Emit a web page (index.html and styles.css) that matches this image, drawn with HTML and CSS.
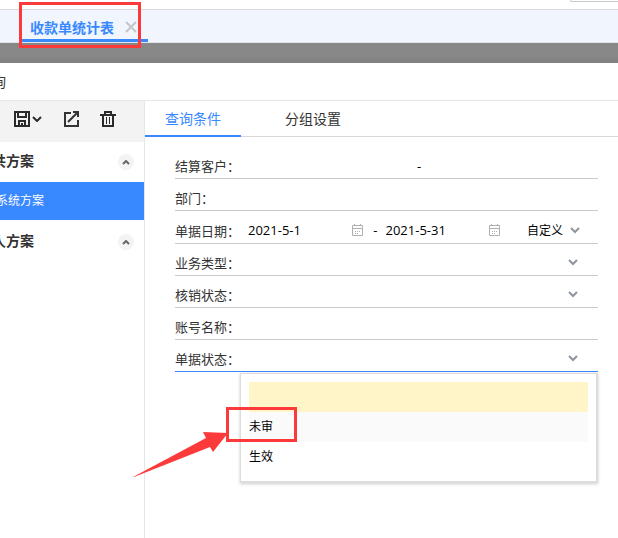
FILE: index.html
```html
<!DOCTYPE html>
<html lang="zh-CN">
<head>
    <meta charset="UTF-8">
    <meta name="viewport" content="width=device-width, initial-scale=1.0">
    <title>收款单统计表</title>
    <link rel="stylesheet" href="styles.css">
</head>
<body>
    <div class="app">
        <div class="topbar">
            <div class="topbar-search"></div>
        </div>
        <div class="page-tabs">
            <div class="page-tab">
                <a href="#">收款单统计表</a>
                <button class="tab-close" aria-label="关闭">
                    <svg width="12" height="12" viewBox="0 0 12 12"><path d="M1 1l10 10M11 1L1 11" fill="none" stroke="#c4c6ca" stroke-width="2"/></svg>
                </button>
                <div class="mark mark-tab"></div>
            </div>
        </div>
        <div class="mask"></div>

        <div class="dialog">
            <div class="dialog-title">查询</div>
            <div class="dialog-body">
                <div class="sidebar">
                    <div class="toolbar">
                        <button class="tool" aria-label="保存">
                            <svg width="16" height="16" viewBox="0 0 16 16" fill="none" stroke="#2b2b2b" stroke-width="2"><path d="M1 1h14v14H1z"/><path d="M4 1v5h8V1M5 15v-5h6v5"/><path d="M8 12v3"/></svg>
                            <svg width="10" height="6" viewBox="0 0 10 6" fill="none" stroke="#2b2b2b" stroke-width="2"><path d="M1 1l4 4 4-4"/></svg>
                        </button>
                        <button class="tool" aria-label="另存">
                            <svg width="16" height="16" viewBox="0 0 16 16" fill="none" stroke="#333" stroke-width="2"><path d="M8 2H2v13h13V9"/><path d="M5 11l9-9M10 1h5v5"/></svg>
                        </button>
                        <button class="tool" aria-label="删除">
                            <svg width="16" height="16" viewBox="0 0 16 16" fill="none" stroke="#2b2b2b" stroke-width="2"><path d="M0 4h16M5 4V1h6v3M3 4v11h10V4"/><path d="M6.500 6v7M9.500 6v7" stroke-width="1"/></svg>
                        </button>
                    </div>
                    <div class="group-head">
                        <span>公共方案</span>
                        <button class="collapse" aria-label="收起公共方案">
                            <svg width="8" height="5" viewBox="0 0 8 5"><path d="M1 4l3-3 3 3" fill="none" stroke="#666" stroke-width="2"/></svg>
                        </button>
                    </div>
                    <a class="scheme active" href="#">系统方案</a>
                    <div class="group-head">
                        <span>个人方案</span>
                        <button class="collapse" aria-label="收起个人方案">
                            <svg width="8" height="5" viewBox="0 0 8 5"><path d="M1 4l3-3 3 3" fill="none" stroke="#666" stroke-width="2"/></svg>
                        </button>
                    </div>
                </div>

                <div class="content">
                    <div class="tabs">
                        <button class="tab active">查询条件</button>
                        <button class="tab">分组设置</button>
                    </div>
                    <form class="form">
                        <div class="row">
                            <label for="customer-from">结算客户：</label>
                            <div class="field">
                                <input type="text" id="customer-from">
                                <span class="dash">-</span>
                                <input type="text" aria-label="结算客户至">
                            </div>
                        </div>
                        <div class="row">
                            <label for="dept">部门：</label>
                            <div class="field"><input type="text" id="dept"></div>
                        </div>
                        <div class="row row-date">
                            <label for="date-from">单据日期：</label>
                            <div class="field">
                                <div class="date">
                                    <input type="text" id="date-from" value="2021-5-1">
                                    <svg width="11" height="12" viewBox="0 0 11 12" fill="none" stroke="#b0b0b0"><path d="M.5 1.500h10v10H.5zM.5 4.500h10M2.500 0v2M8.500 0v2"/><path d="M3 7.500h5M3 9.500h3" stroke-dasharray="1 1"/></svg>
                                </div>
                                <span class="dash">-</span>
                                <div class="date">
                                    <input type="text" aria-label="单据日期至" value="2021-5-31">
                                    <svg width="11" height="12" viewBox="0 0 11 12" fill="none" stroke="#b0b0b0"><path d="M.5 1.500h10v10H.5zM.5 4.500h10M2.500 0v2M8.500 0v2"/><path d="M3 7.500h5M3 9.500h3" stroke-dasharray="1 1"/></svg>
                                </div>
                                <div class="range">
                                    <select aria-label="日期范围"><option>自定义</option></select>
                                    <svg class="arrow" width="10" height="7" viewBox="0 0 10 7"><path d="M1 1l4 4 4-4"/></svg>
                                </div>
                            </div>
                        </div>
                        <div class="row">
                            <label for="biz-type">业务类型：</label>
                            <div class="field pick">
                                <select id="biz-type"><option></option></select>
                                <svg class="arrow" width="10" height="7" viewBox="0 0 10 7"><path d="M1 1l4 4 4-4"/></svg>
                            </div>
                        </div>
                        <div class="row">
                            <label for="verify-status">核销状态：</label>
                            <div class="field pick">
                                <select id="verify-status"><option></option></select>
                                <svg class="arrow" width="10" height="7" viewBox="0 0 10 7"><path d="M1 1l4 4 4-4"/></svg>
                            </div>
                        </div>
                        <div class="row">
                            <label for="account">账号名称：</label>
                            <div class="field"><input type="text" id="account"></div>
                        </div>
                        <div class="row focus">
                            <label for="bill-status">单据状态：</label>
                            <div class="field pick">
                                <select id="bill-status"><option></option></select>
                                <svg class="arrow" width="10" height="7" viewBox="0 0 10 7"><path d="M1 1l4 4 4-4"/></svg>
                                <ul class="dropdown" role="listbox" aria-label="单据状态">
                                    <li class="selected" role="option" aria-selected="true"></li>
                                    <li class="hover" role="option">未审</li>
                                    <li role="option">生效</li>
                                    <li class="mark mark-option" role="presentation"></li>
                                    <li class="mark-arrow" role="presentation">
                                        <svg width="96" height="46" viewBox="0 0 96 46"><path d="M0 45L73 6 70 0 95 1 80 20 77 15 1 45z" fill="#fd3a3a"/></svg>
                                    </li>
                                </ul>
                            </div>
                        </div>
                    </form>
                </div>
            </div>
        </div>
    </div>
</body>
</html>
```
FILE: styles.css
```css
:root {
    --primary-color: #3888ff;
    --mark-color: #fd3a3a;
    --line-color: #cacaca;
    --border-color: #e6e6e6;
}
* {
    box-sizing: border-box;
}
body {
    font-family: "Open Sans", "Noto Sans CJK SC", sans-serif;
    font-size: 13px;
    margin: 0;
    background-color: white;
    color: #333;
    overflow: hidden;
}
button, input, select {
    font: inherit;
    color: inherit;
    border: none;
    background: none;
    padding: 0;
    margin: 0;
    outline: none;
}
button {
    cursor: pointer;
}
a {
    color: inherit;
    text-decoration: none;
}
svg {
    display: block;
    flex: none;
}
.app {
    display: flex;
    flex-direction: column;
    min-height: 100vh;
    margin-left: -40px;
}
.topbar {
    display: flex;
    justify-content: flex-end;
    height: 10px;
    border-bottom: 1px solid #dcdcdc;
}
.topbar-search {
    width: 48px;
    height: 2px;
    border-left: 1px solid #c8c8c8;
    border-bottom: 1px solid #c8c8c8;
    border-bottom-left-radius: 2px;
}
.page-tabs {
    display: flex;
    height: 33px;
    padding-left: 60px;
    background-color: #f1f6fe;
    border-bottom: 1px solid #dfe3ea;
}
.page-tab {
    position: relative;
    display: flex;
    align-items: center;
    gap: 11px;
    padding: 4px 11px 0 10px;
    border-bottom: 3px solid var(--primary-color);
    color: var(--primary-color);
    font-size: 14px;
    font-weight: bold;
}
.mask {
    height: 20px;
    background: linear-gradient(#888 60%, #808080);
}
.mark {
    position: absolute;
    border: 3px solid var(--mark-color);
    pointer-events: none;
}
.mark-tab {
    top: -8px;
    left: -1px;
    width: 122px;
    height: 46px;
}
.dialog {
    flex: 1;
    display: flex;
    flex-direction: column;
    background-color: white;
}
.dialog-title {
    height: 38px;
    padding-left: 18px;
    line-height: 38px;
    font-size: 14px;
    border-bottom: 1px solid var(--border-color);
}
.dialog-body {
    flex: 1;
    display: flex;
}
.sidebar {
    width: 185px;
    flex: none;
    border-right: 1px solid var(--border-color);
}
.toolbar {
    display: flex;
    gap: 21px;
    height: 41px;
    padding: 0 0 5px 54px;
    background-color: #f3f3f3;
}
.tool {
    display: flex;
    align-items: center;
    gap: 2px;
}
.group-head {
    display: flex;
    align-items: center;
    justify-content: space-between;
    height: 40px;
    padding: 0 10px 0 18px;
    font-size: 14px;
    font-weight: bold;
}
.group-head span {
    padding-bottom: 4px;
}
.collapse {
    display: flex;
    align-items: center;
    justify-content: center;
    width: 16px;
    height: 16px;
    border-radius: 50%;
    background-color: #f3f3f3;
}
.scheme {
    display: block;
    height: 38px;
    margin-bottom: 2px;
    padding-left: 36px;
    line-height: 38px;
    font-size: 12px;
}
.scheme.active {
    background-color: var(--primary-color);
    color: white;
}
.content {
    flex: 1;
    min-width: 0;
}
.tabs {
    display: flex;
    gap: 24px;
    height: 36px;
    border-bottom: 1px solid #d8d8d8;
}
.tab {
    height: 36px;
    padding: 0 20px;
    font-size: 14px;
    border-bottom: 2px solid transparent;
}
.tab.active {
    color: var(--primary-color);
    border-bottom-color: var(--primary-color);
}
.form {
    padding: 10px 20px 0 30px;
}
.row {
    display: flex;
    align-items: center;
    height: 32px;
    padding-top: 6px;
    border-bottom: 1px solid var(--line-color);
}
.row-date {
    height: 33px;
}
.row.focus {
    border-bottom-color: var(--primary-color);
}
.row label {
    width: 65px;
    flex: none;
}
.field {
    position: relative;
    flex: 1;
    display: flex;
    align-items: center;
    align-self: stretch;
    min-width: 0;
    color: #000;
}
.field input {
    flex: 1;
    min-width: 0;
    padding-left: 8px;
}
.field select {
    flex: 1;
    min-width: 0;
    padding-left: 8px;
    appearance: none;
}
.dash {
    width: 15px;
    flex: none;
    text-align: center;
}
.row-date .dash {
    text-align: right;
}
.date {
    flex: 1;
    display: flex;
    align-items: center;
    min-width: 0;
}
.range {
    display: flex;
    align-items: center;
    width: 98px;
    padding: 0 18px 0 19px;
    font-size: 12px;
}
.pick {
    padding-right: 20px;
}
.arrow {
    fill: none;
    stroke: #8f969c;
    stroke-width: 2;
}
.dropdown {
    position: absolute;
    top: 100%;
    left: 0;
    right: 0;
    z-index: 10;
    margin: 2px 0 0;
    padding: 8px;
    height: 110px;
    list-style: none;
    font-size: 12px;
    line-height: 30px;
    background-color: white;
    border: 1px solid #ddd;
    border-width: 1px 2px 2px 1px;
    box-shadow: 0 1px 3px rgba(0,0,0,0.2);
}
.dropdown li[role="option"] {
    height: 30px;
}
.dropdown .selected {
    background-color: #fff5c8;
}
.dropdown .hover {
    background-color: #fafafa;
}
.mark-option {
    top: 33px;
    left: -15px;
    width: 71px;
    height: 35px;
}
.mark-arrow {
    position: absolute;
    top: 58px;
    left: -108px;
}
```
